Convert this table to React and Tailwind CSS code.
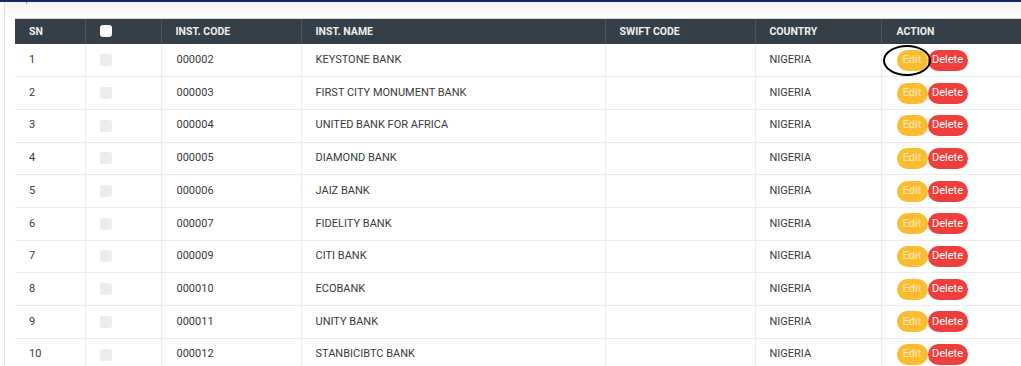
const banks = [
  { sn: 1, code: '000002', name: 'KEYSTONE BANK' },
  { sn: 2, code: '000003', name: 'FIRST CITY MONUMENT BANK' },
  { sn: 3, code: '000004', name: 'UNITED BANK FOR AFRICA' },
  { sn: 4, code: '000005', name: 'DIAMOND BANK' },
  { sn: 5, code: '000006', name: 'JAIZ BANK' },
  { sn: 6, code: '000007', name: 'FIDELITY BANK' },
  { sn: 7, code: '000009', name: 'CITI BANK' },
  { sn: 8, code: '000010', name: 'ECOBANK' },
  { sn: 9, code: '000011', name: 'UNITY BANK' },
  { sn: 10, code: '000012', name: 'STANBICIBTC BANK' },
];

export default function App() {
  return (
    <div className="h-[366px] w-[1021px] overflow-hidden bg-white font-['Roboto',sans-serif]">
      <div className="h-[2px] bg-[#1a2370]" />
      <div className="relative flex h-[364px] border-l border-[#e3e3e3] ml-[4px] bg-gradient-to-b from-[#f4f4f4] to-white to-[16px]">
        <div className="absolute left-[21px] top-0 h-[2px] w-px bg-[#9aa0a8]" />
        <div className="mt-[16px] ml-[10px] w-[1020px] border-t border-[#d6d9dc]">
          <table className="w-full table-fixed border-collapse text-left">
            <thead>
              <tr className="h-[25px] bg-[#343f47] text-[10.5px] font-bold text-[#eef0f1]">
                <th className="w-[70px] pl-[14px] font-bold">SN</th>
                <th className="w-[76px] border-l border-[#4a545c] pl-[14px]">
                  <span className="block h-[12px] w-[12px] -translate-y-px rounded-[3px] bg-white" />
                </th>
                <th className="w-[140px] border-l border-[#4a545c] pl-[14px] font-bold">INST. CODE</th>
                <th className="w-[304px] border-l border-[#4a545c] pl-[14px] font-bold">INST. NAME</th>
                <th className="w-[150px] border-l border-[#4a545c] pl-[14px] font-bold">SWIFT CODE</th>
                <th className="w-[126px] border-l border-[#4a545c] pl-[14px] font-bold">COUNTRY</th>
                <th className="border-l border-[#4a545c] pl-[15px] font-bold">ACTION</th>
              </tr>
            </thead>
            <tbody className="text-[11px] text-[#3a3a3a]">
              {banks.map((b) => (
                <tr key={b.sn} className="h-[32.7px] border-b border-[#ececec]">
                  <td className="pl-[14px]">{b.sn}</td>
                  <td className="border-l border-[#ececec] pl-[14px]">
                    <span className="block h-[12px] w-[12px] rounded-[3px] bg-[#ececec]" />
                  </td>
                  <td className="border-l border-[#ececec] pl-[15px]">{b.code}</td>
                  <td className="border-l border-[#ececec] pl-[14px]">{b.name}</td>
                  <td className="border-l border-[#ececec] pl-[14px]"></td>
                  <td className="border-l border-[#ececec] pl-[14px]">NIGERIA</td>
                  <td className="relative border-l border-[#ececec] pl-[15px]">
                    <div className="flex items-center">
                      <button className="h-[21px] w-[31px] rounded-full bg-[#fbbd2f] text-[11px] text-[#fdebc0]">
                        Edit
                      </button>
                      <button className="h-[21px] w-[40px] rounded-full bg-[#ef3f3c] text-[11px] text-white">
                        Delete
                      </button>
                    </div>
                    {b.sn === 1 && (
                      <span className="pointer-events-none absolute left-[1px] top-[1px] h-[31px] w-[48px] rounded-[50%] border-2 border-black" />
                    )}
                  </td>
                </tr>
              ))}
            </tbody>
          </table>
        </div>
      </div>
    </div>
  );
}
